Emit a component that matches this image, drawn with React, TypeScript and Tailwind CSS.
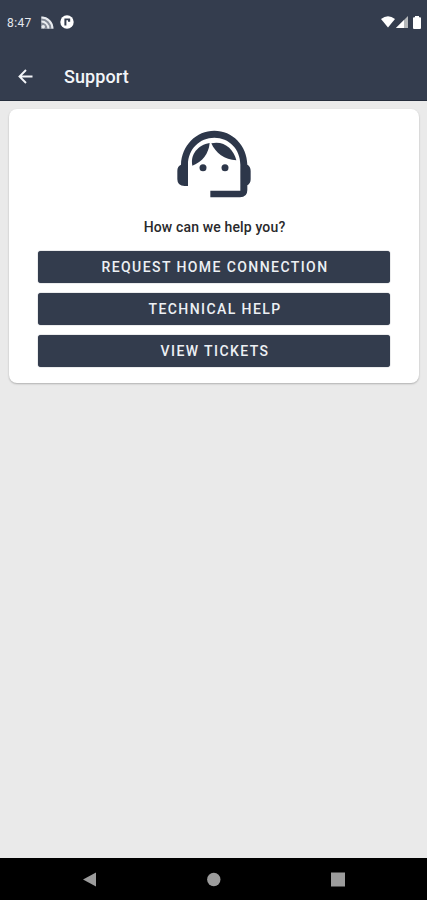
import React from "react";

const actions = ["REQUEST HOME CONNECTION", "TECHNICAL HELP", "VIEW TICKETS"];

function StatusBar() {
  return (
    <div className="flex h-[44px] items-center pl-[7px] pr-[6px] text-white">
      <span className="w-[34px] whitespace-nowrap pt-px text-[12px] leading-[16px] tracking-[0.4px] text-[#e6e9ee]">8:47</span>
      <svg className="h-[13px] w-[13px]" viewBox="0 0 13 13" fill="none" stroke="#e9ecf0" strokeWidth="2">
        <path d="M0 0.5A12.5 12.5 0 0 1 12.5 13H0z" fill="#b9bec7" opacity="0.6" stroke="none" />
        <circle cx="2.2" cy="10.8" r="1.8" fill="#e9ecf0" stroke="none" />
        <path d="M0.5 5.6a6.9 6.9 0 0 1 6.9 6.9M0.5 1.6a10.9 10.9 0 0 1 10.9 10.9" />
      </svg>
      <svg className="ml-[6px] h-[14px] w-[14px]" viewBox="0 0 14 14">
        <circle cx="7" cy="7" r="6.7" fill="#fff" />
        <path d="M4.4 10.5V3.6h5.8v3.2H8V5.2H6.4v5.3z" fill="#343d4e" />
      </svg>
      <div className="ml-auto flex items-center">
        <svg className="h-[12px] w-[14px]" viewBox="0 0 14 12">
          <path d="M0 3Q7-2.4 14 3L7 11.6z" fill="#fff" />
        </svg>
        <svg className="ml-[1px] h-[12px] w-[12px]" viewBox="0 0 12 12">
          <path d="M12 0v12H0z" fill="#b5b8ba" />
          <path d="M8 4v8H0z" fill="#fff" />
        </svg>
        <svg className="ml-[5px] h-[13px] w-[8px]" viewBox="0 0 8 13">
          <path d="M2 0h4v1.2h1q1 0 1 1V12q0 1-1 1H1q-1 0-1-1V2.2q0-1 1-1h1z" fill="#fff" />
        </svg>
      </div>
    </div>
  );
}

function AgentIcon() {
  return (
    <svg className="h-[68px] w-[74px] shrink-0" viewBox="51 45 222 204" fill="#2d374a">
      <path d="M84 213H74Q52 213 52 193V167Q52 153 63 149C65 91 109 47 163 47S261 91 262 149Q272 154 272 168V193Q272 205 262 211V225Q262 247 240 247H151V227H241V149C241 102 207 68 163 68S84 102 84 149Z" />
      <path d="M149 84C114 90 90 118 97 152C127 140 146 117 149 84Z" />
      <path d="M154 85C166 113 194 135 229 136C221 101 191 76 154 85Z" />
      <circle cx="129" cy="158" r="10.5" />
      <circle cx="195" cy="158" r="10.5" />
    </svg>
  );
}

export default function App() {
  return (
    <div className="flex h-[900px] w-[427px] flex-col bg-[#eaeaea] font-['Roboto','Liberation_Sans',sans-serif]">
      <header className="h-[101px] shrink-0 border-b border-[#252d3c] bg-[#343d4e]">
        <StatusBar />
        <div className="flex h-[64px] items-center pl-[18px] text-[#f3f5f8]">
          <svg className="h-[15px] w-[15px]" viewBox="0 0 15 15" fill="none" stroke="currentColor" strokeWidth="1.9">
            <path d="M14.5 7.5H1.7M8 1L1.5 7.5L8 14" />
          </svg>
          <h1 className="ml-[31px] pt-[2px] text-[18px] font-medium leading-[24px] tracking-[0.1px]">Support</h1>
        </div>
      </header>

      <main className="flex-1 pl-[9px] pr-[8px] pt-[8px]">
        <section className="flex h-[274px] flex-col items-center rounded-[8px] bg-white px-[29px] pt-[21px] shadow-[0_1px_2px_rgba(0,0,0,0.25)]">
          <AgentIcon />
          <p className="mt-[20px] pl-px text-[14px] font-medium leading-[18px] tracking-[0.15px] text-[#29292b]">How can we help you?</p>
          <div className="mt-[14.5px] flex w-full flex-col gap-[10.4px]">
            {actions.map((label) => (
              <button
                key={label}
                className="h-[32px] w-full rounded-[3px] bg-[#333c4d] pl-[2px] text-[14px] font-medium leading-[32px] tracking-[1.42px] text-[#edf0f4] shadow-[0_0_1px_#333c4d]"
              >
                {label}
              </button>
            ))}
          </div>
        </section>
      </main>

      <nav className="h-[42px] shrink-0 bg-black">
        <svg className="h-[42px] w-[427px]" viewBox="0 0 427 42" fill="#9c9c9c">
          <path d="M96 14.5V28.5L83 21.5Z" />
          <circle cx="213.8" cy="21.5" r="6.7" />
          <rect x="331" y="14.5" width="14" height="14" />
        </svg>
      </nav>
    </div>
  );
}
